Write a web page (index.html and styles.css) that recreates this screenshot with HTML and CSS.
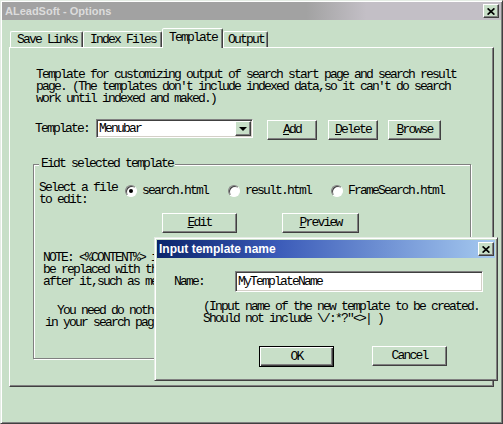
FILE: index.html
```html
<!DOCTYPE html>
<html lang="en">
<head>
  <meta charset="UTF-8" />
  <title>ALeadSoft - Options</title>
  <link rel="stylesheet" href="styles.css">
</head>
<body>
  <div class="window">
    <div class="titlebar titlebar-inactive">
      <span class="title">ALeadSoft - Options</span>
      <span class="close-btn">
        <svg width="8" height="7" viewBox="0 0 8 7"><path d="M0.6 0.4l6.8 6.2M7.4 0.4l-6.8 6.2" stroke="#000" stroke-width="1.7"/></svg>
      </span>
    </div>
    <div class="client">
      <div class="tabs">
        <div class="tab">Save Links</div>
        <div class="tab">Index Files</div>
        <div class="tab tab-active">Template</div>
        <div class="tab tab-last">Output</div>
      </div>
      <div class="panel">
        <p class="intro">Template for customizing output of search start page and search result page. (The templates don't include indexed data,so it can't do search work until indexed and maked.)</p>

        <div class="template-row">
          <span class="field-label">Template:</span>
          <div class="combo">
            <span class="combo-value">Menubar</span>
            <span class="combo-arrow"></span>
          </div>
          <button class="btn btn-add"><u>A</u>dd</button>
          <button class="btn btn-delete"><u>D</u>elete</button>
          <button class="btn btn-browse"><u>B</u>rowse</button>
        </div>

        <fieldset class="group">
          <legend>Eidt selected template</legend>
          <div class="file-row">
            <div class="file-label">Select a file to edit:</div>
            <label class="radio-option"><span class="radio radio-checked"></span>search.html</label>
            <label class="radio-option"><span class="radio"></span>result.html</label>
            <label class="radio-option"><span class="radio"></span>FrameSearch.html</label>
          </div>
          <div class="edit-row">
            <button class="btn btn-edit"><u>E</u>dit</button>
            <button class="btn btn-preview"><u>P</u>review</button>
          </div>
          <!-- ダイアログの下に隠れていない部分だけ -->
          <p class="note">NOTE: &lt;%CONTENT%&gt; i
be replaced with th
after it,such as me</p>
          <p class="note note-indent">You need do noth
in your search pag</p>
        </fieldset>
      </div>
    </div>

    <!-- 名前入力ダイアログ -->
    <div class="dialog">
      <div class="titlebar titlebar-active">
        <span class="title">Input template name</span>
        <span class="close-btn">
          <svg width="8" height="7" viewBox="0 0 8 7"><path d="M0.6 0.4l6.8 6.2M7.4 0.4l-6.8 6.2" stroke="#000" stroke-width="1.7"/></svg>
        </span>
      </div>
      <div class="dialog-body">
        <div class="name-row">
          <span class="name-label">Name:</span>
          <div class="textbox">MyTemplateName</div>
        </div>
        <p class="hint">(Input name of the new template to be created.
Should not include \/:*?"&lt;&gt;| )</p>
        <div class="dialog-buttons">
          <button class="btn btn-default">OK</button>
          <button class="btn btn-cancel">Cancel</button>
        </div>
      </div>
    </div>
  </div>
</body>
</html>
```

FILE: styles.css
```css
* {
  box-sizing: border-box;
}
body {
  margin: 0;
  background: #c8dfc8;
  color: #000;
  font-family: "Liberation Mono", "Noto Sans CJK SC", monospace;
  font-size: 13px;
  line-height: 12px;
  letter-spacing: -1.8px; /* 1文字 6px 幅にそろえる */
}
p {
  margin: 0;
}
/* --- ウィンドウ枠 --- */
.window {
  position: relative;
  width: 503px;
  height: 424px;
  padding: 1px;
  display: flex;
  flex-direction: column;
  background: #c8dfc8;
  border: 1px solid;
  border-color: #e4ece4 #404040 #404040 #e4ece4;
  box-shadow: inset 1px 1px 0 #fff, inset -1px -1px 0 #808080;
}
.titlebar {
  height: 18px;
  flex-shrink: 0;
  display: flex;
  align-items: center;
  justify-content: space-between;
  padding: 0 2px 0 3px;
  font-family: "Liberation Sans", Arial, sans-serif;
  font-weight: bold;
  font-size: 11px;
  letter-spacing: 0;
}
.titlebar-inactive {
  background: linear-gradient(90deg, #a2a2a2 0%, #a2a2a2 61%, #c3bfc6 73%, #c3bfc6 100%);
  color: #dcdcdc;
}
.titlebar-active {
  background: linear-gradient(90deg, #0a246a 0%, #3a5ab8 35%, #a6caf0 100%);
  color: #fff;
  font-size: 12px;
  padding: 0 1px 0 2px;
}
.close-btn {
  width: 16px;
  height: 14px;
  display: flex;
  align-items: center;
  justify-content: center;
  background: #c8dfc8;
  border: 1px solid;
  border-color: #fff #404040 #404040 #fff;
  box-shadow: inset -1px -1px 0 #808080;
}
/* --- タブ --- */
.client {
  flex: 1;
  display: flex;
  flex-direction: column;
  padding: 8px 0 0 7px;
}
.tabs {
  position: relative;
  z-index: 1;
  height: 19px;
  margin-left: 1px;
  display: flex;
  align-items: flex-end;
}
.tab {
  height: 16px;
  padding: 0 5px 0 6px;
  display: flex;
  align-items: center;
  border: 1px solid;
  border-bottom: none;
  border-color: #fff #404040 transparent #fff;
  border-radius: 2px 2px 0 0;
  box-shadow: inset -1px 0 0 #808080;
  white-space: nowrap;
}
.tab-active {
  height: 20px;
  margin-bottom: -1px;
  padding-bottom: 2px;
  background: #c8dfc8;
}
.tab-last {
  padding: 0 3px 0 4px;
}
.panel {
  width: 485px;
  height: 340px;
  padding: 21px 0 0 23px;
  border: 1px solid;
  border-color: #fff #404040 #404040 #fff;
  box-shadow: inset -1px -1px 0 #808080;
}
.intro {
  margin-left: 3px;
  max-width: 430px;
}
/* --- ボタン類 --- */
.btn {
  height: 20px;
  padding: 0;
  font: inherit;
  letter-spacing: inherit;
  color: #000;
  background: #c8dfc8;
  border: 1px solid;
  border-color: #fff #404040 #404040 #fff;
  box-shadow: inset -1px -1px 0 #808080;
}
.btn u {
  text-underline-offset: 1px;
}
.template-row {
  display: flex;
  align-items: flex-start;
  margin: 14px 0 0 2px;
}
.field-label {
  width: 61px;
  padding-top: 4px;
}
.combo {
  width: 157px;
  height: 19px;
  display: flex;
  align-items: center;
  justify-content: space-between;
  padding: 1px;
  background: #fff;
  border: 1px solid;
  border-color: #808080 #fff #fff #808080;
  box-shadow: inset 1px 1px 0 #404040, inset -1px -1px 0 #d4d0c8;
}
.combo-value {
  padding-left: 1px;
}
.combo-arrow {
  width: 16px;
  height: 15px;
  display: flex;
  align-items: center;
  justify-content: center;
  background: #c8dfc8;
  border: 1px solid;
  border-color: #fff #404040 #404040 #fff;
  box-shadow: inset -1px -1px 0 #808080;
}
.combo-arrow::after {
  content: "";
  border-top: 4px solid #000;
  border-left: 4px solid transparent;
  border-right: 4px solid transparent;
}
.btn-add {
  width: 50px;
  margin: 1px 0 0 14px;
}
.btn-delete {
  width: 50px;
  margin: 1px 0 0 11px;
}
.btn-browse {
  width: 53px;
  margin: 1px 0 0 10px;
}
/* --- 編集グループ --- */
.group {
  width: 438px;
  height: 201px;
  min-width: 0;
  margin: 18px 0 0;
  padding: 12px 0 0 5px;
  border: 1px solid #808080;
  box-shadow: 1px 1px 0 #fff, inset 1px 1px 0 #fff;
}
.group legend {
  padding: 0 2px;
  line-height: 12px;
  background: #c8dfc8;
}
.file-row {
  display: flex;
  align-items: flex-start;
}
.file-label {
  width: 86px;
  padding-right: 6px;
}
.radio-option {
  width: 103px;
  margin-top: 3px;
  display: flex;
  align-items: center;
  gap: 5px;
  white-space: nowrap;
}
.radio {
  width: 12px;
  height: 12px;
  flex-shrink: 0;
  display: flex;
  align-items: center;
  justify-content: center;
  border-radius: 50%;
  background: #fff;
  border: 1px solid;
  border-color: #808080 #fff #fff #808080;
  box-shadow: inset 1px 1px 0 #404040;
}
.radio-checked::after {
  content: "";
  width: 4px;
  height: 4px;
  border-radius: 50%;
  background: #000;
}
.edit-row {
  display: flex;
  gap: 45px;
  margin: 7px 0 0 123px;
}
.btn-edit {
  width: 75px;
}
.btn-preview {
  width: 77px;
}
.note {
  margin: 19px 0 0 4px;
  white-space: pre-line;
}
.note-indent {
  margin: 17px 0 0 6px;
  text-indent: 12px;
}
/* --- ダイアログ --- */
.dialog {
  position: absolute;
  left: 153px;
  top: 236px;
  width: 344px;
  height: 144px;
  padding: 2px;
  background: #c8dfc8;
  border: 1px solid;
  border-color: #e4ece4 #404040 #404040 #e4ece4;
  box-shadow: inset 1px 1px 0 #fff, inset -1px -1px 0 #808080;
}
.dialog-body {
  padding: 13px 0 0 17px;
}
.name-row {
  display: flex;
  align-items: center;
}
.name-label {
  width: 61px;
}
.textbox {
  width: 248px;
  height: 21px;
  display: flex;
  align-items: center;
  padding-left: 2px;
  background: #fff;
  border: 1px solid;
  border-color: #808080 #fff #fff #808080;
  box-shadow: inset 1px 1px 0 #404040, inset -1px -1px 0 #d4d0c8;
}
.hint {
  margin: 9px 0 0 29px;
  white-space: pre-line;
}
.dialog-buttons {
  display: flex;
  align-items: flex-start;
  gap: 38px;
  margin: 21px 0 0 85px;
}
.btn-default {
  width: 75px;
  height: 21px;
  border-color: #000;
  box-shadow: inset 1px 1px 0 #fff, inset -1px -1px 0 #404040, inset -2px -2px 0 #808080;
}
.btn-cancel {
  width: 75px;
}
```
